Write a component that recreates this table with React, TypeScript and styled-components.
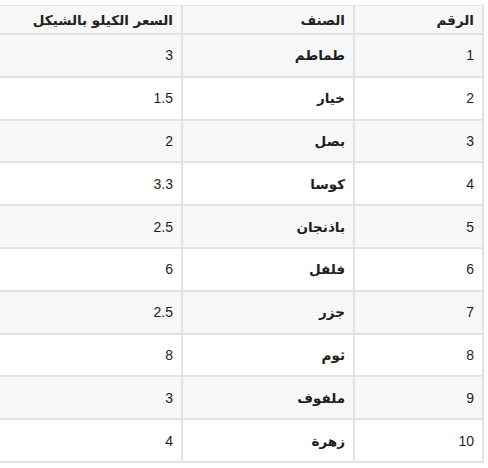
import React from "react";
import styled, { createGlobalStyle } from "styled-components";

const Global = createGlobalStyle`
  html, body { margin: 0; padding: 0; background: #fff; }
  body { font-family: "DejaVu Sans", "Noto Sans", sans-serif; color: #333; }
`;

const Wrap = styled.div`
  direction: rtl;
  width: 484px;
  padding-top: 5px;
`;

const Table = styled.table`
  width: 484px;
  border-collapse: collapse;
  table-layout: fixed;
  font-family: "DejaVu Sans", "Liberation Sans", sans-serif;
`;

const Col = styled.col<{ $w: number }>`
  width: ${(p) => p.$w}px;
`;

const Head = styled.th`
  height: 27px;
  padding: 0 8px 0 8px;
  text-align: right;
  vertical-align: middle;
  font-size: 13.5px;
  font-weight: bold;
  color: #222;
  background: #f7f7f7;
  border: 2px solid #e2e2e2;
  border-top: 1px solid #e6e6e6;
  &:last-child { border-left: none; }
`;

const Row = styled.tr<{ $odd: boolean }>`
  height: 42.8px;
  background: ${(p) => (p.$odd ? "#f7f7f7" : "#ffffff")};
`;

const Cell = styled.td<{ $num?: boolean }>`
  padding: 0 8px;
  text-align: right;
  vertical-align: middle;
  font-size: ${(p) => (p.$num ? "14px" : "13.5px")};
  font-weight: ${(p) => (p.$num ? "normal" : "bold")};
  font-family: ${(p) =>
    p.$num ? '"Liberation Sans", Arial, sans-serif' : '"DejaVu Sans", sans-serif'};
  color: #1e1e1e;
  border: 2px solid #e2e2e2;
  &:last-child { border-left: none; }
`;

const data: [string, string][] = [
  ["طماطم", "3"],
  ["خيار", "1.5"],
  ["بصل", "2"],
  ["كوسا", "3.3"],
  ["باذنجان", "2.5"],
  ["فلفل", "6"],
  ["جزر", "2.5"],
  ["ثوم", "8"],
  ["ملفوف", "3"],
  ["زهرة", "4"],
];

export default function App() {
  return (
    <>
      <Global />
      <Wrap>
        <Table>
          <colgroup>
            <Col $w={129} />
            <Col $w={172} />
            <Col $w={183} />
          </colgroup>
          <thead>
            <tr>
              <Head>الرقم</Head>
              <Head>الصنف</Head>
              <Head>السعر الكيلو بالشيكل</Head>
            </tr>
          </thead>
          <tbody>
            {data.map(([name, price], i) => (
              <Row key={i} $odd={i % 2 === 0}>
                <Cell $num>{i + 1}</Cell>
                <Cell>{name}</Cell>
                <Cell $num>{price}</Cell>
              </Row>
            ))}
          </tbody>
        </Table>
      </Wrap>
    </>
  );
}
